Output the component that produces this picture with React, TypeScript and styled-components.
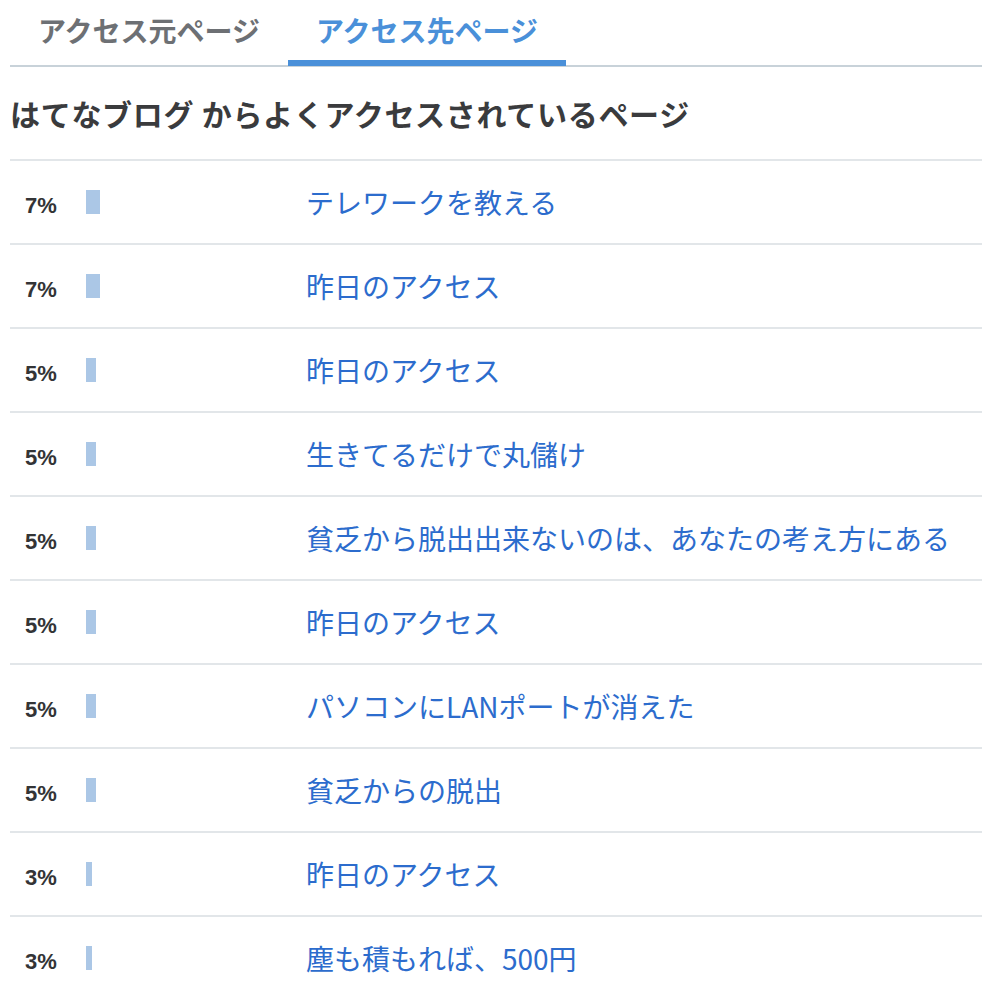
import React from "react";
import styled, { createGlobalStyle } from "styled-components";

const GlobalStyle = createGlobalStyle`
  html, body {
    margin: 0;
    padding: 0;
    background: #ffffff;
  }
  body {
    padding-left: 10px;
    font-family: "Noto Sans CJK JP", "Noto Sans", sans-serif;
  }
`;

const Page = styled.div`
  display: flex;
  flex-direction: column;
`;

const TabBar = styled.div`
  display: flex;
  border-bottom: 2px solid #c8d2d9;
`;

const Tab = styled.div<{ $active?: boolean }>`
  width: 278px;
  height: 66px;
  box-sizing: border-box;
  display: flex;
  align-items: flex-start;
  justify-content: center;
  padding-top: 8px;
  font-size: 28px;
  font-weight: 700;
  line-height: 44px;
  color: ${(p) => (p.$active ? "#4a90d9" : "#6d7074")};
  border-bottom: 6px solid ${(p) => (p.$active ? "#4a90d9" : "transparent")};
  margin-bottom: -1px;
  cursor: pointer;
`;

const Heading = styled.h2`
  margin: 0;
  padding: 24px 0 23px;
  font-size: 30px;
  line-height: 45px;
  font-weight: 700;
  color: #3a3b3d;
  letter-spacing: 0.7px;
`;

const List = styled.div`
  display: flex;
  flex-direction: column;
`;

const Row = styled.div`
  display: grid;
  grid-template-columns: 61px 220px 1fr;
  align-items: center;
  height: 84px;
  box-sizing: border-box;
  border-top: 2px solid #e2e6e9;
  padding-left: 15px;
`;

const Percent = styled.span`
  font-family: "Liberation Sans", Arial, sans-serif;
  font-weight: 700;
  font-size: 22px;
  color: #333436;
  padding-top: 8px;
`;

const BarCell = styled.div`
  display: flex;
  align-items: center;
`;

const Bar = styled.div`
  height: 24px;
  background: #abc7e6;
`;

const Title = styled.a`
  font-size: 28px;
  line-height: 40px;
  color: #2c6ccd;
  text-decoration: none;
  white-space: nowrap;
`;

const rows: { pct: number; title: string }[] = [
  { pct: 7, title: "テレワークを教える" },
  { pct: 7, title: "昨日のアクセス" },
  { pct: 5, title: "昨日のアクセス" },
  { pct: 5, title: "生きてるだけで丸儲け" },
  { pct: 5, title: "貧乏から脱出出来ないのは、あなたの考え方にある" },
  { pct: 5, title: "昨日のアクセス" },
  { pct: 5, title: "パソコンにLANポートが消えた" },
  { pct: 5, title: "貧乏からの脱出" },
  { pct: 3, title: "昨日のアクセス" },
  { pct: 3, title: "塵も積もれば、500円" },
];

export default function App() {
  return (
    <Page>
      <GlobalStyle />
      <TabBar>
        <Tab>アクセス元ページ</Tab>
        <Tab $active>アクセス先ページ</Tab>
      </TabBar>
      <Heading>はてなブログ からよくアクセスされているページ</Heading>
      <List>
        {rows.map((r, i) => (
          <Row key={i}>
            <Percent>{r.pct}%</Percent>
            <BarCell>
              <Bar style={{ width: `${r.pct * 2}px` }} />
            </BarCell>
            <Title href="#">{r.title}</Title>
          </Row>
        ))}
      </List>
    </Page>
  );
}
